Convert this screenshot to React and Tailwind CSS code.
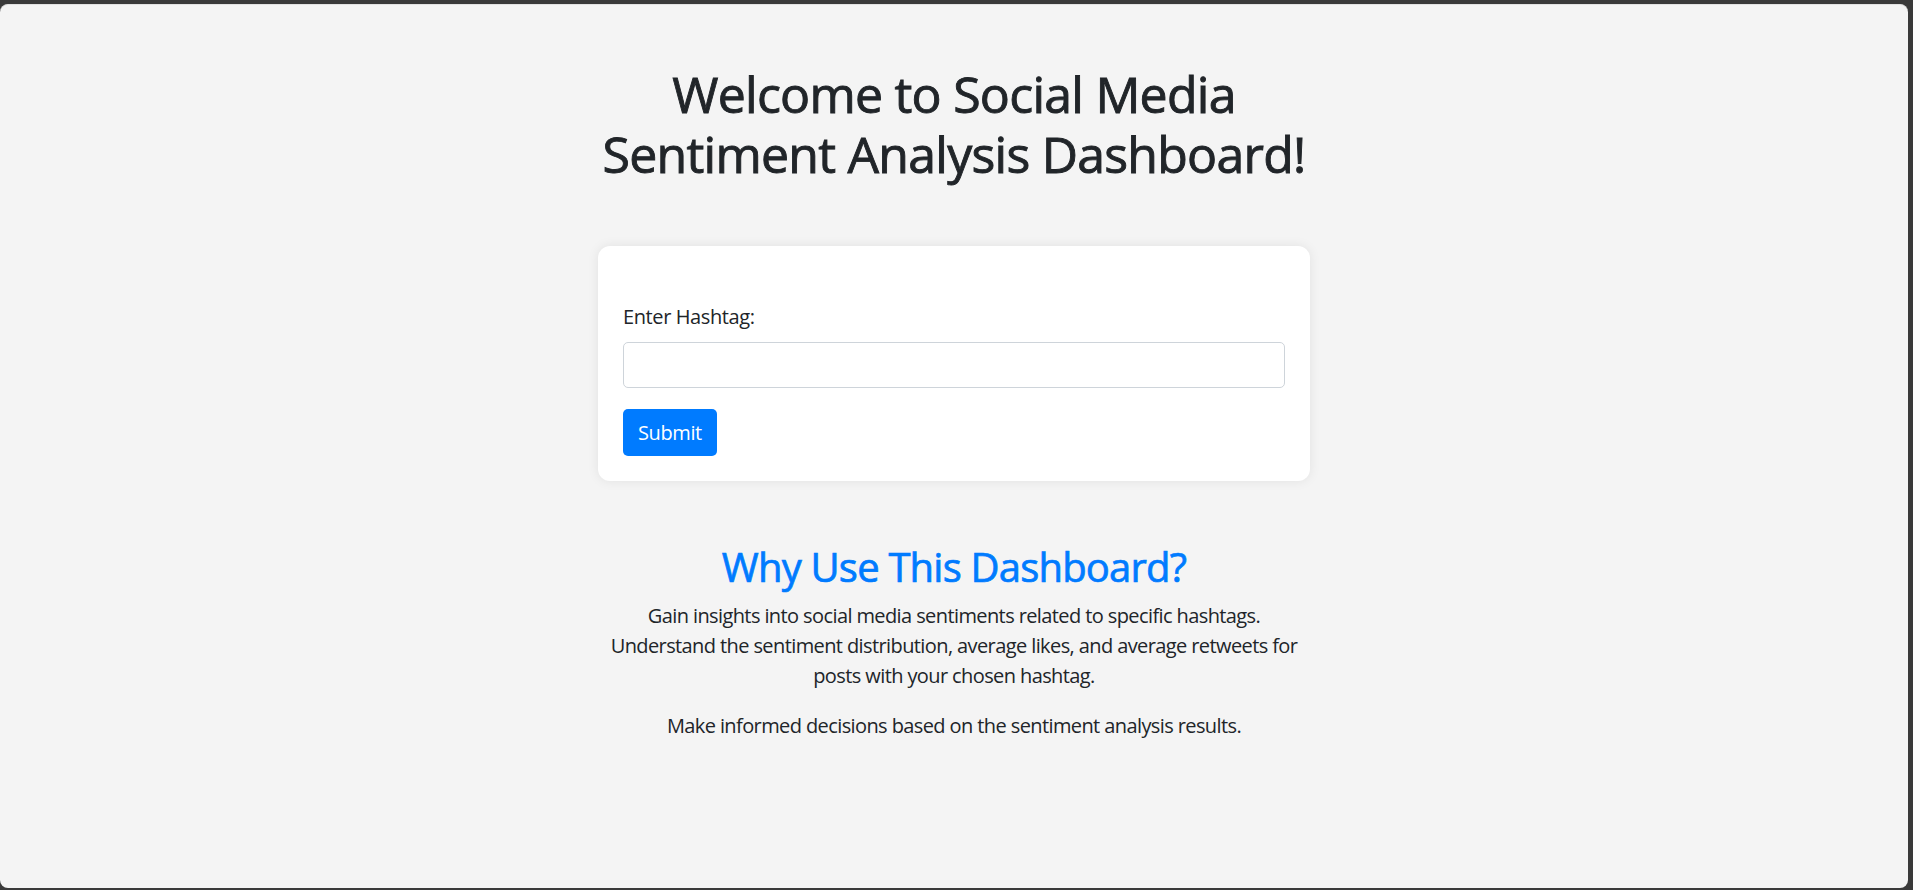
import { useState } from 'react';

/** Главная страница дашборда анализа тональности */
export default function App() {
  const [hashtag, setHashtag] = useState('');

  const handleSubmit = (e) => {
    e.preventDefault();
  };

  return (
    <div
      className="h-[890px] w-full bg-[#3a3a3a] pt-[4px] pr-[5px] pb-[2px]"
      style={{ fontFamily: '"Open Sans", "Noto Sans", sans-serif' }}
    >
      <div className="flex h-full flex-col items-center rounded-[8px] border-t border-[#e2e2e2] bg-[#f4f4f4] text-[#212529]">
        {/* Заголовок */}
        <h1 className="mt-[59px] w-[760px] text-center text-[50px] font-medium leading-[60px] tracking-[-0.015em] [-webkit-text-stroke:0.9px_#212529]">
          Welcome to Social Media
          <br />
          Sentiment Analysis Dashboard!
        </h1>

        {/* Форма ввода хэштега */}
        <form
          onSubmit={handleSubmit}
          className="mt-[62px] flex w-[712px] flex-col items-start rounded-[12px] bg-white px-[25px] pt-[56px] pb-[25px] shadow-[0_0_12px_rgba(0,0,0,0.08)]"
        >
          <label htmlFor="hashtag" className="mb-[10px] text-[20px] leading-[30px] tracking-[-0.02em]">
            Enter Hashtag:
          </label>
          <input
            id="hashtag"
            type="text"
            value={hashtag}
            onChange={(e) => setHashtag(e.target.value)}
            className="h-[46px] w-full rounded-[5px] border border-[#ced4da] bg-white px-[15px] text-[20px] outline-none"
          />
          <button
            type="submit"
            className="mt-[21px] h-[47px] rounded-[5px] bg-[#007bff] px-[15px] text-[20px] leading-[30px] tracking-[-0.02em] text-white"
          >
            Submit
          </button>
        </form>

        {/* Описание */}
        <div className="mt-[62px] flex w-[760px] flex-col items-center text-center">
          <h2 className="mb-[10px] text-[40px] font-medium leading-[48px] tracking-[-0.02em] text-[#007bff] [-webkit-text-stroke:0.7px_#007bff]">
            Why Use This Dashboard?
          </h2>
          <p className="mb-[20px] text-[20px] leading-[30px] tracking-[-0.03em]">
            Gain insights into social media sentiments related to specific hashtags.
            <br />
            Understand the sentiment distribution, average likes, and average retweets for
            <br />
            posts with your chosen hashtag.
          </p>
          <p className="text-[20px] leading-[30px] tracking-[-0.03em]">
            Make informed decisions based on the sentiment analysis results.
          </p>
        </div>
      </div>
    </div>
  );
}
